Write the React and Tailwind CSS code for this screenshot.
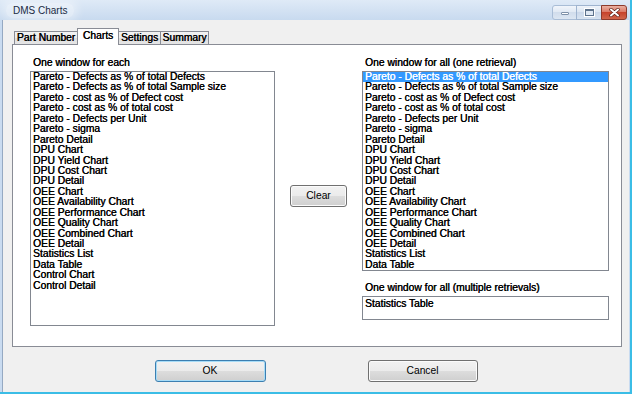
import React from 'react';

const eachItems = [
  'Pareto - Defects as % of total Defects',
  'Pareto - Defects as % of total Sample size',
  'Pareto - cost as % of Defect cost',
  'Pareto - cost as % of total cost',
  'Pareto - Defects per Unit',
  'Pareto - sigma',
  'Pareto Detail',
  'DPU Chart',
  'DPU Yield Chart',
  'DPU Cost Chart',
  'DPU Detail',
  'OEE Chart',
  'OEE Availability Chart',
  'OEE Performance Chart',
  'OEE Quality Chart',
  'OEE Combined Chart',
  'OEE Detail',
  'Statistics List',
  'Data Table',
  'Control Chart',
  'Control Detail',
];

const allItems = eachItems.slice(0, 19);

const tabs = [
  { label: 'Part Number', width: 'w-[64px]' },
  { label: 'Charts', width: 'w-[42px]', active: true },
  { label: 'Settings', width: 'w-[43px]' },
  { label: 'Summary', width: 'w-[49px]' },
];

function ListBox({ items, selected, className }) {
  return (
    <div className={`overflow-hidden border border-[#828790] bg-white ${className}`}>
      {items.map((item, i) => (
        <div
          key={item}
          className={`h-[10.45px] whitespace-nowrap px-[2px] leading-[10.45px] ${
            i === selected ? 'bg-[#3399ff] text-white' : 'text-black'
          }`}
        >
          {item}
        </div>
      ))}
    </div>
  );
}

function WinButton({ children, focused, className }) {
  return (
    <button
      className={`flex h-[22px] items-center justify-center rounded-[3px] border bg-[linear-gradient(#f2f2f2,#ebebeb_50%,#dddddd_50%,#cfcfcf)] text-[10.3px] text-black ${
        focused
          ? 'border-[#3c7fb1] shadow-[inset_0_0_0_1px_#a7dcf7]'
          : 'border-[#707070] shadow-[inset_0_0_0_1px_#fbfbfb]'
      } ${className}`}
    >
      {children}
    </button>
  );
}

function CaptionButtons() {
  return (
    <div className="mt-[4px] flex h-[15px] self-start">
      <div className="flex w-[25px] items-center justify-center rounded-l-[3px] border border-[#a9bdd6] bg-[linear-gradient(#f1f5fb,#dfe8f3_50%,#d1ddec_50%,#dce6f2)]">
        <span className="mt-[3px] h-[3px] w-[8px] rounded-[1px] border border-[#7d90a8] bg-white" />
      </div>
      <div className="-ml-px flex w-[26px] items-center justify-center border border-[#9fb4cf] bg-[linear-gradient(#eef3fa,#d9e4f1_50%,#cbd8ea_50%,#d7e3f1)]">
        <span className="h-[7px] w-[9px] border border-t-2 border-[#5d728c] bg-[#dfe8f3] shadow-[0_0_0_1px_#ffffff]" />
      </div>
      <div className="-ml-px flex w-[26px] items-center justify-center rounded-r-[3px] border border-[#8d3a2c] bg-[linear-gradient(#eab0a3,#d9735f_50%,#c7432c_50%,#d0654b)]">
        <svg width="11" height="9" viewBox="0 0 11 9">
          <path d="M2 1.5 L9 7.5 M9 1.5 L2 7.5" stroke="#5a1f16" strokeWidth="3.4" strokeLinecap="round" />
          <path d="M2 1.5 L9 7.5 M9 1.5 L2 7.5" stroke="#ffffff" strokeWidth="2" strokeLinecap="round" />
        </svg>
      </div>
    </div>
  );
}

export default function App() {
  return (
    <div className="flex h-[394px] w-[632px] flex-col overflow-hidden border-b-2 border-r-2 border-[#3bbde6] bg-[#c9dbf0] font-['Liberation_Sans',Arial,sans-serif] text-[10.3px] [text-shadow:0.35px_0_0_currentColor]">
      <div className="flex h-[20px] shrink-0 items-center bg-[linear-gradient(#dfeaf7,#c8daef)] pl-[6px] pr-[3px]">
        <span className="rounded-[7px] bg-white/40 px-[7px] text-[10px] leading-[15px] text-[#1b2b44] shadow-[0_0_8px_4px_rgba(255,255,255,0.35)] [text-shadow:none]">
          DMS Charts
        </span>
        <div className="ml-auto flex">
          <CaptionButtons />
        </div>
      </div>

      <div className="ml-[2px] mr-px flex flex-1 flex-col border-l border-[#95a9c2] bg-[#f0f0f0] pl-[9px]">
        <div className="flex h-[24px] items-end pl-[3px] pt-[9px]">
          {tabs.map((tab) =>
            tab.active ? (
              <div
                key={tab.label}
                className={`relative z-10 -mb-px -ml-px flex h-[17px] items-center justify-center border border-b-0 border-[#898c95] bg-white pb-[2px] ${tab.width}`}
              >
                {tab.label}
              </div>
            ) : (
              <div
                key={tab.label}
                className={`-ml-px flex h-[13px] items-center justify-center border border-b-0 border-[#898c95] bg-[linear-gradient(#f3f3f3,#ebebeb_50%,#dedede_50%,#e6e6e6)] ${tab.width}`}
              >
                {tab.label}
              </div>
            ),
          )}
        </div>

        <div className="flex h-[303px] w-[610px] border border-[#898c95] bg-white pl-[17px] pt-[12px]">
          <div className="flex w-[245px] flex-col">
            <div className="h-[12px] pl-[3px] leading-[12px]">One window for each</div>
            <ListBox items={eachItems} className="mt-[2px] h-[255px]" />
          </div>

          <WinButton className="ml-[15px] mt-[128px] w-[57px]">Clear</WinButton>

          <div className="ml-[15px] flex w-[247px] flex-col">
            <div className="h-[12px] pl-[3px] leading-[12px]">One window for all (one retrieval)</div>
            <ListBox items={allItems} selected={0} className="mt-[2px] h-[200px]" />
            <div className="mt-[11px] h-[12px] pl-[3px] leading-[12px]">
              One window for all (multiple retrievals)
            </div>
            <ListBox items={['Statistics Table']} className="mt-[2px] h-[24px] pt-[2px]" />
          </div>
        </div>

        <div className="mt-[13px] flex justify-center gap-[102px] pr-[9px]">
          <WinButton focused className="w-[111px]">
            OK
          </WinButton>
          <WinButton className="w-[110px]">Cancel</WinButton>
        </div>
      </div>
    </div>
  );
}
